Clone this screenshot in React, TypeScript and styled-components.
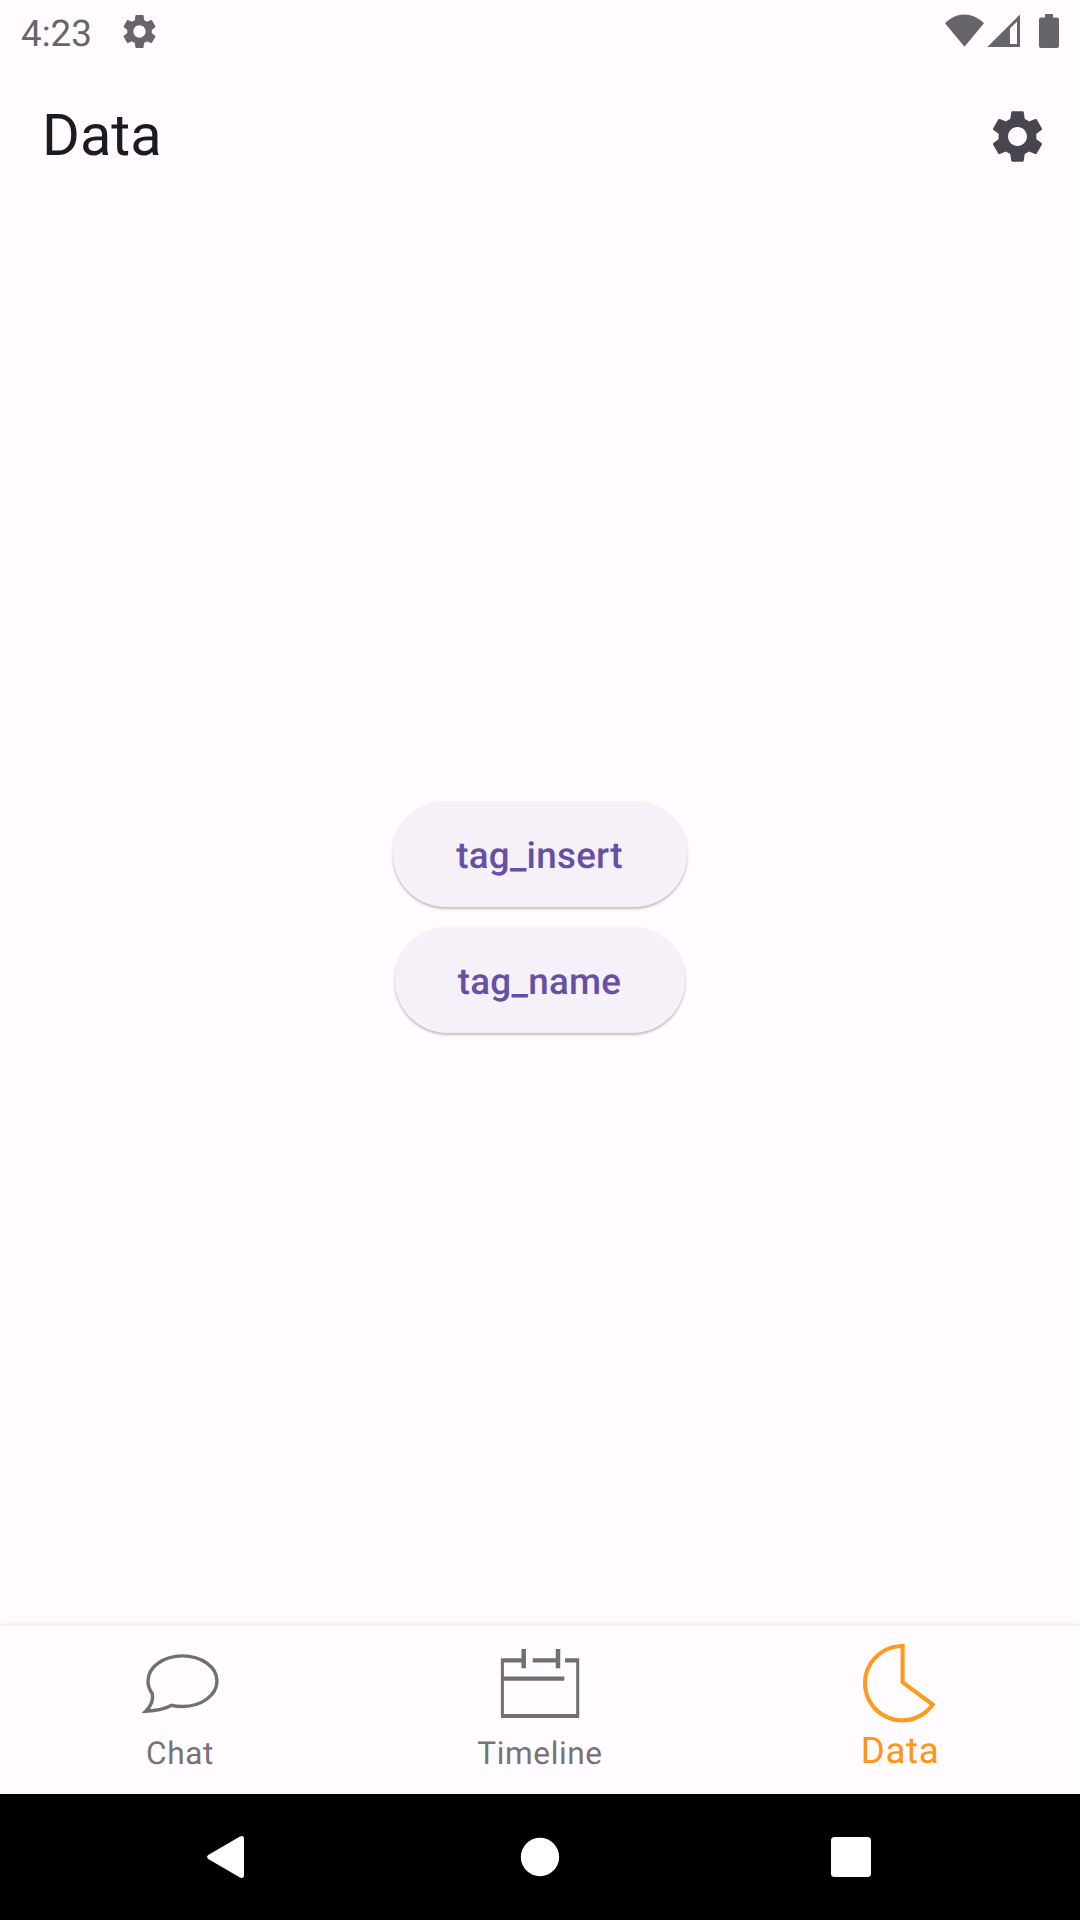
import React from "react";
import styled, { createGlobalStyle } from "styled-components";
import { MdSettings } from "react-icons/md";

const GlobalStyle = createGlobalStyle`
  * { box-sizing: border-box; }
  body { margin: 0; background: #fffbff; }
`;

const Screen = styled.div`
  display: flex;
  flex-direction: column;
  width: 1080px;
  height: 1920px;
  overflow: hidden;
  background: #fffbff;
  font-family: Roboto, "Noto Sans", sans-serif;
  text-rendering: geometricPrecision;
`;

const StatusBar = styled.header`
  display: flex;
  align-items: flex-start;
  justify-content: space-between;
  flex: 0 0 63px;
  padding: 11px 21px 0;
  color: #676569;
`;

const StatusLeft = styled.div`
  display: flex;
  align-items: flex-start;
  gap: 27.5px;
`;

const Clock = styled.span`
  font-size: 36.75px;
  line-height: 45px;
`;

const StatusGear = styled(MdSettings)`
  width: 41px;
  height: 41px;
`;

const StatusIcons = styled.svg`
  display: block;
  width: 120px;
  height: 40px;
`;

const AppBar = styled.div`
  display: flex;
  align-items: center;
  justify-content: space-between;
  flex: 0 0 147px;
  padding: 0 31.5px 0 42px;
`;

const Title = styled.h1`
  margin: 0 0 1px;
  font-size: 57.75px;
  font-weight: 400;
  line-height: 74px;
  color: #1c1b1f;
`;

const IconButton = styled.button`
  display: flex;
  padding: 0;
  border: 0;
  background: none;
  color: #49454f;
  font-size: 63px;
`;

const Content = styled.main`
  display: flex;
  flex: 1;
  flex-direction: column;
  align-items: center;
  justify-content: center;
  gap: 21px;
  padding-bottom: 1px;
`;

const TagButton = styled.button`
  height: 105px;
  padding: 2px 64px 0 63px;
  border: 0;
  border-radius: 53px;
  background: #f6f1f9;
  box-shadow:
    0 2px 2px rgba(0, 0, 0, 0.17),
    0 1px 4px rgba(0, 0, 0, 0.12);
  color: #6750a4;
  font-family: inherit;
  font-size: 36.75px;
  font-weight: 500;
  letter-spacing: 0.2625px;
  line-height: 52px;
  text-rendering: inherit;
`;

const BottomNav = styled.nav`
  display: grid;
  grid-template-columns: repeat(3, 1fr);
  flex: 0 0 168px;
  background: #fffbff;
  box-shadow: 0 -1px 6px rgba(0, 0, 0, 0.1);
`;

const NavItem = styled.div<{ $active?: boolean }>`
  display: flex;
  flex-direction: column;
  align-items: center;
  padding-top: 18px;
  color: ${(p) => (p.$active ? "#ff9a20" : "#6e7072")};
`;

const NavIcon = styled.svg`
  display: block;
  width: 80px;
  height: 80px;
  fill: none;
  stroke: currentColor;
`;

const NavLabel = styled.span<{ $active?: boolean }>`
  margin-top: ${(p) => (p.$active ? 5 : 8)}px;
  color: ${(p) => (p.$active ? "#ff9416" : "#757377")};
  font-size: ${(p) => (p.$active ? 36.75 : 31.5)}px;
  letter-spacing: 0.656px;
  line-height: 44px;
`;

const SystemNav = styled.footer`
  display: flex;
  align-items: center;
  justify-content: space-between;
  flex: 0 0 126px;
  padding: 0 208px 0 206px;
  background: #000;
`;

const SystemIcon = styled.svg`
  display: block;
  width: 42px;
  height: 44px;
  fill: #fff;
`;

export default function App() {
  return (
    <>
      <GlobalStyle />
      <Screen>
        <StatusBar>
          <StatusLeft>
            <Clock>4:23</Clock>
            <StatusGear />
          </StatusLeft>
          <StatusIcons viewBox="0 0 120 40" fill="currentColor">
            <path d="M6 12.300C17 .6 33.500 .6 45 12.300L25.500 35.800Z" />
            <path
              fillRule="evenodd"
              d="M48.300 36L81 3.500V36ZM71 17.500V33H78V10.500Z"
            />
            <path d="M106 3h8v3.500h4q2 0 2 2V35q0 2-2 2h-16q-2 0-2-2V8.500q0-2 2-2h4Z" />
          </StatusIcons>
        </StatusBar>

        <AppBar>
          <Title>Data</Title>
          <IconButton aria-label="Settings">
            <MdSettings />
          </IconButton>
        </AppBar>

        <Content>
          <TagButton>tag_insert</TagButton>
          <TagButton>tag_name</TagButton>
        </Content>

        <BottomNav>
          <NavItem>
            <NavIcon viewBox="0 0 80 80" strokeWidth="3.4">
              <path d="M12.300 49.500C9.500 46 8 42 8 37C8 23 23.500 11.900 42.500 11.900S77 23 77 37S61.500 62.500 42.500 62.500C38.500 62.500 35 62.200 31.700 61.300C25.500 64.800 17 66.700 5.800 67.200C10.500 62.500 13.600 56 12.300 49.500Z" />
            </NavIcon>
            <NavLabel>Chat</NavLabel>
          </NavItem>
          <NavItem>
            <NavIcon viewBox="0 0 80 80" strokeWidth="4.2">
              <path d="M1 16.300H23.700M32.700 16.300H58M65 16.300H79M2.500 34.700H64.300M1 72H79" />
              <path d="M23.700 5V24.300M58 5V24.300" strokeWidth="4.500" />
              <path d="M2.400 15V73M77.700 15V73" strokeWidth="3" />
            </NavIcon>
            <NavLabel>Timeline</NavLabel>
          </NavItem>
          <NavItem $active>
            <NavIcon viewBox="0 0 80 80" strokeWidth="4.100">
              <path d="M42.600 2V38.300L72.700 60.500A37.200 37.200 0 1 1 42.600 2Z" />
            </NavIcon>
            <NavLabel $active>Data</NavLabel>
          </NavItem>
        </BottomNav>

        <SystemNav>
          <SystemIcon viewBox="0 0 42 44">
            <path d="M2.200 20L34 1.400Q38 0 38 4V40Q38 44 34 42.600L2.200 24Q0 22 2.200 20Z" />
          </SystemIcon>
          <SystemIcon viewBox="0 0 42 44">
            <circle cx="22" cy="22" r="19.200" />
          </SystemIcon>
          <SystemIcon viewBox="0 0 42 44">
            <rect x="1" y="2" width="40" height="40" rx="3.500" />
          </SystemIcon>
        </SystemNav>
      </Screen>
    </>
  );
}
